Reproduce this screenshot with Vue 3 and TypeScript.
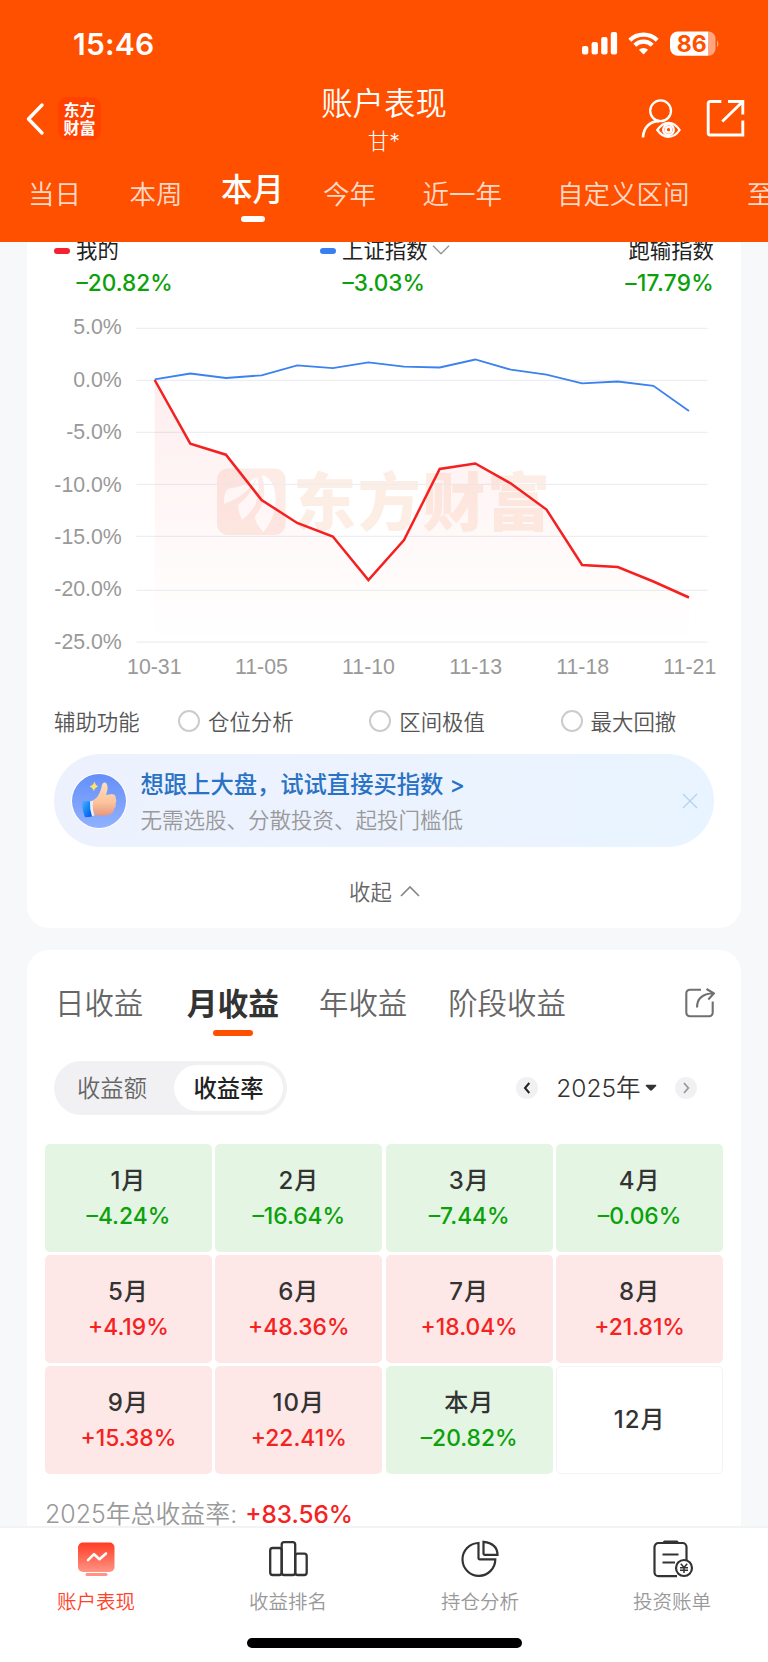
<script setup lang="ts">
interface Tab { label: string; left: number; active?: boolean }
interface Month { name: string; value?: string; tone: 'down' | 'up' | 'none' }

const periods: Tab[] = [
  { label: '当日', left: 28 },
  { label: '本周', left: 48.5 },
  { label: '本月', left: 38.5, active: true },
  { label: '今年', left: 39 },
  { label: '近一年', left: 46.5 },
  { label: '自定义区间', left: 55 },
  { label: '至今', left: 57.5 },
]

const X0 = 154.7
const STEP = 35.62
const mine = [380, 443.7, 454.7, 500, 523, 536.5, 580, 540, 469, 463.5, 483.5, 509.5, 565, 567, 581.5, 597.5]
const index = [379.3, 373.5, 378, 375.3, 365.3, 368.2, 362.3, 366.7, 367.5, 359.5, 369.7, 374.7, 383.3, 381.5, 385.8, 411]
const toPoints = (ys: number[]) => ys.map((y, i) => `${(X0 + STEP * i).toFixed(1)},${y}`).join(' ')
const mineLine = toPoints(mine)
const indexLine = toPoints(index)
const mineArea = `${X0},642 ${mineLine} ${X0 + STEP * 15},642`

const yAxis = [
  { label: '5.0%', y: 328.3 },
  { label: '0.0%', y: 380.4 },
  { label: '-5.0%', y: 432.4 },
  { label: '-10.0%', y: 484.4 },
  { label: '-15.0%', y: 536.4 },
  { label: '-20.0%', y: 590.3 },
  { label: '-25.0%', y: 642.2 },
]
const yBase = [334.3, 386.8, 439.2, 491.5, 544, 596.4, 648.8]
const xAxis = ['10-31', '11-05', '11-10', '11-13', '11-18', '11-21']

const helpers = ['仓位分析', '区间极值', '最大回撤']

const incomeTabs: Tab[] = [
  { label: '日收益', left: 28 },
  { label: '月收益', left: 43.5, active: true },
  { label: '年收益', left: 40 },
  { label: '阶段收益', left: 41 },
]

const months: Month[] = [
  { name: '1月', value: '–4.24%', tone: 'down' },
  { name: '2月', value: '–16.64%', tone: 'down' },
  { name: '3月', value: '–7.44%', tone: 'down' },
  { name: '4月', value: '–0.06%', tone: 'down' },
  { name: '5月', value: '+4.19%', tone: 'up' },
  { name: '6月', value: '+48.36%', tone: 'up' },
  { name: '7月', value: '+18.04%', tone: 'up' },
  { name: '8月', value: '+21.81%', tone: 'up' },
  { name: '9月', value: '+15.38%', tone: 'up' },
  { name: '10月', value: '+22.41%', tone: 'up' },
  { name: '本月', value: '–20.82%', tone: 'down' },
  { name: '12月', tone: 'none' },
]
</script>

<template>
  <div class="screen">
    <header class="header">
      <div class="status">
        <span class="time">15:46</span>
        <svg class="status-icons" width="140" height="28" viewBox="0 0 140 28">
          <g fill="#fff">
            <rect x="0" y="16" width="6.3" height="8.6" rx="2" />
            <rect x="9.6" y="12" width="6.3" height="12.6" rx="2" />
            <rect x="19.2" y="7" width="6.3" height="17.6" rx="2" />
            <rect x="28.8" y="2" width="6.3" height="22.6" rx="2" />
          </g>
          <g fill="none" stroke="#fff" stroke-width="4.2">
            <path d="M47.8 10.2a19.4 19.4 0 0 1 27.4 0" />
            <path d="M52.8 15.2a12.3 12.3 0 0 1 17.4 0" />
          </g>
          <path d="M61.5 24.5l-4.6-4.700a6.500 6.500 0 0 1 9.200 0z" fill="#fff" />
          <path d="M96 1.500h30.500v24.300H96a8 8 0 0 1-8-8V9.500a8 8 0 0 1 8-8z" fill="#fff" />
          <path d="M126.500 1.500a7 7 0 0 1 7 7v10.300a7 7 0 0 1-7 7z" fill="#ffa680" />
          <path d="M135 10.200q3 3.500 0 7z" fill="#ffa680" />
          <text x="109.800" y="21.900" text-anchor="middle" class="battery">86</text>
        </svg>
      </div>
      <div class="nav">
        <svg class="back" width="20" height="34" viewBox="0 0 20 34"><path d="M17 3L3.500 17L17 31" fill="none" stroke="#fff" stroke-width="3.400" stroke-linecap="round" stroke-linejoin="round" /></svg>
        <div class="brand"><span>东方</span><span>财富</span></div>
        <div class="title">
          <h1>账户表现</h1>
          <p>甘*</p>
        </div>
        <svg class="user" width="42" height="42" viewBox="0 0 42 42" fill="none" stroke="#fff" stroke-width="2.300">
          <circle cx="20.600" cy="12.800" r="10.400" />
          <path d="M3 39.500c.4-10.200 7.200-16.200 16-16.400" stroke-width="2.600" />
          <path d="M17.300 32c3.200-4.800 7-7.200 11.200-7.200S36.700 27.200 39.600 32c-2.900 4.500-6.900 6.800-11.100 6.800S20.500 36.500 17.300 32z" />
          <circle cx="28.500" cy="31.700" r="5.300" />
          <circle cx="28.500" cy="31.700" r="2.800" />
        </svg>
        <svg class="export" width="40" height="40" viewBox="0 0 40 40" fill="none" stroke="#fff" stroke-width="2.900">
          <path d="M16.300 3.500H5.200a2 2 0 0 0-2 2V35a2 2 0 0 0 2 2h32.600V22.500M23 3.500h14.800v13M37 4.300L17.300 23.500" />
        </svg>
      </div>
      <nav class="periods">
        <span v-for="p in periods" :key="p.label" class="period" :class="{ active: p.active }" :style="{ marginLeft: p.left + 'px' }">{{ p.label }}</span>
      </nav>
    </header>

    <main class="content">
      <section class="card chart-card">
        <div class="legend">
          <div class="leg first"><div class="leg-name"><i class="dash red"></i>我的</div><b>–20.82%</b></div>
          <div class="leg second">
            <div class="leg-name"><i class="dash blue"></i>上证指数
              <svg width="18" height="12" viewBox="0 0 18 12"><path d="M1 1.800l8 8 8-8" fill="none" stroke="#999" stroke-width="1.500" /></svg>
            </div><b>–3.03%</b>
          </div>
          <div class="leg third"><div class="leg-name">跑输指数</div><b>–17.79%</b></div>
        </div>
        <svg class="chart" width="714" height="390" viewBox="27 300 714 390">
          <defs>
            <linearGradient id="area" x1="0" y1="380" x2="0" y2="642" gradientUnits="userSpaceOnUse">
              <stop offset="0" stop-color="#f5222d" stop-opacity=".08" />
              <stop offset=".85" stop-color="#f5402d" stop-opacity=".012" />
              <stop offset="1" stop-color="#f5222d" stop-opacity="0" />
            </linearGradient>
          </defs>
          <g>
            <rect x="217" y="468.500" width="68.500" height="66.500" rx="11" fill="#fdebe6" />
            <g fill="#fff">
              <path d="M224 504q-.5-13 5-15.500 15-1 28-12-9 19-33 27.500z" />
              <path d="M238 505q14-10 19.500-29 2.500 15-1.500 27-4 9-14 17-3.500-7-4-15z" />
              <path d="M262 475q15 4 13.500 31-3 16-12 26-9-9-8.500-16 14-16 7-41z" />
            </g>
            <text x="293" y="525" class="watermark" textLength="257">东方财富</text>
          </g>
          <line v-for="t in yAxis" :key="t.label" x1="136.500" x2="707.500" :y1="t.y" :y2="t.y" stroke="#edeef4" stroke-width="1.200" />
          <polygon :points="mineArea" fill="url(#area)" />
          <text v-for="(t, i) in yAxis" :key="'l' + t.label" x="121.800" :y="yBase[i]" text-anchor="end" class="axis">{{ t.label }}</text>
          <text v-for="(d, i) in xAxis" :key="d" :x="154.300 + 107.100 * i" y="674.300" text-anchor="middle" class="axis">{{ d }}</text>
          <polyline :points="indexLine" fill="none" stroke="#3b82f0" stroke-width="1.800" />
          <polyline :points="mineLine" fill="none" stroke="#f52020" stroke-width="2.500" />
        </svg>
        <div class="helpers">
          <span class="helper-title">辅助功能</span>
          <label v-for="h in helpers" :key="h" class="helper"><i></i><span>{{ h }}</span></label>
        </div>
        <div class="banner">
          <svg class="thumb" width="58" height="58" viewBox="0 0 58 58">
            <defs>
              <linearGradient id="tb" x1="0" y1="0" x2="0" y2="1"><stop offset="0" stop-color="#648ff8" /><stop offset="1" stop-color="#91b1ff" /></linearGradient>
              <linearGradient id="hand" x1="0" y1="0" x2="0" y2="1"><stop offset="0" stop-color="#ffe0bd" /><stop offset=".6" stop-color="#fbc49d" /><stop offset="1" stop-color="#e7967d" /></linearGradient>
              <linearGradient id="cuff" x1="0" y1="0" x2="1" y2="1"><stop offset="0" stop-color="#4caeff" /><stop offset=".5" stop-color="#1485f7" /><stop offset="1" stop-color="#0650dd" /></linearGradient>
            </defs>
            <circle cx="29" cy="29" r="28" fill="#fff" />
            <circle cx="29" cy="29" r="27" fill="url(#tb)" />
            <path d="M20 29.500q7-2 9.500-8.500 1.500-3 2.500-8 .5-3 3-2.500 3 1 2.500 7l-1.500 5.500 6-1q4 .5 3.700 4 1.500 3-.2 5.500 1 3-1.500 5.500 0 3-3 4.500-2 2-8 2.200-7 .5-13.500-2.700z" fill="url(#hand)" />
            <path d="M19 29.500l4-.5q-1 8 1.500 14.500l-4 .8z" fill="#e9f1ff" />
            <path d="M12.500 29q4 .5 7.500 0-.5 8 2 15.500-4 .8-7 .8-3.500-9-2.500-16.300z" fill="url(#cuff)" />
            <path d="M24.500 9.500q1 4 3.800 4.800-3.200 1-4.600 5-.8-3.800-4.200-4.800 3.800-1.200 5-5z" fill="#ffe16b" />
          </svg>
          <div class="banner-text"><strong>想跟上大盘，试试直接买指数 <em>&gt;</em></strong><span>无需选股、分散投资、起投门槛低</span></div>
          <svg class="close" width="16" height="16" viewBox="0 0 16 16"><path d="M1 1l14 14M15 1L1 15" stroke="#b4cfee" stroke-width="1.100" /></svg>
        </div>
        <div class="collapse"><span>收起</span><svg width="20" height="12" viewBox="0 0 20 12"><path d="M1 11l9-9 9 9" fill="none" stroke="#888" stroke-width="1.700" /></svg></div>
      </section>

      <section class="card income-card">
        <div class="income-tabs">
          <span v-for="t in incomeTabs" :key="t.label" class="income-tab" :class="{ active: t.active }" :style="{ marginLeft: t.left + 'px' }">{{ t.label }}</span>
          <svg class="share" width="32" height="32" viewBox="0 0 32 32" fill="none" stroke="#707070" stroke-width="2.100" stroke-linejoin="round">
            <path d="M17 2.700H5.800a3.500 3.500 0 0 0-3.500 3.500v19.500a3.500 3.500 0 0 0 3.500 3.500h19.400a3.500 3.500 0 0 0 3.500-3.500V14.500" />
            <path d="M13 20.500C13 12.500 18 6.800 29.300 6.300M22.500 2l7.500 4.300-5.700 6.200" />
          </svg>
        </div>
        <div class="controls">
          <div class="segment"><span>收益额</span><span class="on">收益率</span></div>
          <div class="year">
            <i class="round"><svg width="8" height="12" viewBox="0 0 8 12"><path d="M6.300 1L2 6l4.300 5" fill="none" stroke="#222" stroke-width="2" /></svg></i>
            <span>2025年</span>
            <svg class="caret" width="12" height="8" viewBox="0 0 12 8"><path d="M1.200.8h9.600q1 .5.300 1.200L7 6.300q-1 .9-2 0L.9 2Q.2 1.300 1.200.8z" fill="#333" /></svg>
            <i class="round"><svg width="8" height="12" viewBox="0 0 8 12"><path d="M2 1l4.300 5L2 11" fill="none" stroke="#999" stroke-width="1.800" /></svg></i>
          </div>
        </div>
        <div class="months">
          <div v-for="m in months" :key="m.name" class="month" :class="m.tone"><span>{{ m.name }}</span><b v-if="m.value">{{ m.value }}</b></div>
        </div>
        <p class="total">2025年总收益率:<b>+83.56%</b></p>
      </section>
    </main>

    <footer class="tabbar">
      <div class="tabs">
        <div class="tab current">
          <svg width="44" height="44" viewBox="0 0 44 44">
            <defs><linearGradient id="mon" x1="0" y1="0" x2="0" y2="1"><stop offset="0" stop-color="#ff3c22" /><stop offset="1" stop-color="#ff9485" /></linearGradient></defs>
            <rect x="4" y="7.500" width="36.500" height="29.500" rx="5" fill="url(#mon)" />
            <path d="M14 25.200l6-6 5.500 5 6.500-5.700" fill="none" stroke="#fff" stroke-width="2.600" stroke-linecap="round" stroke-linejoin="round" />
            <rect x="11.500" y="38" width="22" height="3" rx="1.500" fill="#ff9485" />
          </svg><span>账户表现</span>
        </div>
        <div class="tab">
          <svg width="44" height="44" viewBox="0 0 44 44" fill="none" stroke="#333" stroke-width="2.300"><rect x="4.200" y="13" width="11.500" height="27" rx="2.500" /><rect x="15.700" y="7.200" width="13.500" height="32.800" rx="2.500" /><rect x="29.200" y="18.700" width="11.500" height="21.300" rx="2.500" /></svg><span>收益排名</span>
        </div>
        <div class="tab">
          <svg width="44" height="44" viewBox="0 0 44 44" fill="none" stroke="#333" stroke-width="2.200"><path d="M20.500 8A16.400 16.400 0 1 0 37.300 24.300H21.500q-1 0-1-1z" /><path d="M25.500 6.800v12q0 1 1 1H39.500Q39.500 8.500 25.500 6.800z" /></svg><span>持仓分析</span>
        </div>
        <div class="tab">
          <svg width="44" height="44" viewBox="0 0 44 44" fill="none" stroke="#333" stroke-width="2.200">
            <path d="M27 41.200H8.500a4 4 0 0 1-4-4V12a4 4 0 0 1 4-4h24a4 4 0 0 1 4 4v13M12.500 19.500H28.500M12.500 27.500H25" />
            <path d="M14.500 7H27" stroke-width="3" stroke-linecap="round" />
            <circle cx="34" cy="33" r="8" />
            <path d="M30.800 28.800l3.200 3.700 3.200-3.700M34 32.500v5.500M30 32.800h8M30 35.300h8" stroke-width="1.500" />
          </svg><span>投资账单</span>
        </div>
      </div>
      <div class="home"></div>
    </footer>
  </div>
</template>

<style>
body { margin: 0; background: #f6f7fa; }
</style>

<style scoped>
* { box-sizing: border-box; }
.screen {
  width: 768px; height: 1662px; overflow: hidden;
  display: grid; grid-template-rows: 242px 1284px 136px;
  font-family: Inter, "Noto Sans CJK SC", sans-serif; color: #333; background: #f6f8fa;
}
h1, p { margin: 0; font-weight: 400; }
i, em { font-style: normal; }
b { font-weight: 500; }
svg { display: block; flex: none; }
.header { background: #ff5000; color: #fff; overflow: hidden; }
.status { height: 88px; display: flex; justify-content: space-between; padding: 30px 53px 0 73px; }
.time { font-size: 30px; font-weight: 600; line-height: 28px; letter-spacing: .2px; }
.status-icons { margin-right: -7px; }
.battery { font: 700 23px Inter, sans-serif; fill: #ff5000; }
.nav { height: 72px; display: flex; align-items: flex-start; }
.back { margin: 14px 0 0 25px; }
.brand {
  width: 43px; height: 43px; margin: 9px 0 0 13px; padding-top: 3px; border-radius: 9px; background: #ff4200;
  display: flex; flex-direction: column; align-items: center;
  font-family: "Noto Sans CJK SC", sans-serif; font-size: 16px; font-weight: 700; line-height: 18px;
}
.title { width: 320px; margin-left: 123px; text-align: center; }
.title h1 { font-size: 31.400px; line-height: 36px; margin-top: -2px; font-weight: 350; }
.title p { font-size: 21.500px; line-height: 28px; margin-top: 5px; font-weight: 300; }
.user { margin: 10px 0 0 96px; }
.export { margin: 10px 0 0 23px; }
.periods { display: flex; white-space: nowrap; font-size: 26.500px; font-weight: 350; color: rgba(255, 255, 255, .8); }
.period { flex: none; line-height: 36px; margin-top: 16px; }
.period.active { font-size: 31.500px; font-weight: 500; color: #fff; margin-top: 12px; display: flex; flex-direction: column; align-items: center; }
.period.active::after { content: ""; width: 24px; height: 6px; border-radius: 3px; background: #fff; margin-top: 8px; }

.content { overflow: hidden; padding: 0 27px; }
.card { background: #fff; }
.chart-card { height: 686px; border-radius: 0 0 22px 22px; }
.legend { display: flex; height: 58px; font-size: 21.400px; }
.leg-name { display: flex; align-items: center; height: 32px; margin-top: -8px; line-height: 32px; color: #222; }
.leg-name svg { margin-left: 4px; }
.leg b { display: block; font-size: 22.600px; line-height: 30px; margin-top: 2px; color: #0ba10b; padding-left: 22.500px; }
.first { width: 266px; padding-left: 27px; }
.second { width: 200px; padding-left: 27px; }
.third { margin-left: auto; padding-right: 27px; }
.leg.third b { padding: 0; text-align: right; letter-spacing: .3px; }
.third .leg-name { justify-content: flex-end; }
.dash { width: 16px; height: 6px; border-radius: 3px; margin: 2px 6px 0 0; }
.red { background: #f5222d; }
.blue { background: #3880f2; }
.axis { font: 21.300px "Liberation Sans", Arial, sans-serif; fill: #999; }
.watermark { font: 900 63px "Noto Sans CJK SC", sans-serif; fill: #fdeee5; }
.helpers { display: flex; height: 62px; align-items: center; padding: 0 0 0 27px; font-size: 21.400px; color: #555; font-weight: 350; }
.helper-title { flex: none; width: 124px; margin-top: -2px; }
.helper { flex: none; width: 191.300px; display: flex; align-items: center; }
.helper span { margin-top: -2px; }
.helper i { width: 22px; height: 22px; border: 2px solid #ccc; border-radius: 50%; margin-right: 8px; }
.banner { width: 660px; height: 93px; margin: 2px 0 0 27px; border-radius: 47px; background: linear-gradient(100deg, #edf1fe, #ebf3ff 65%, #e8f4ff); display: flex; align-items: center; }
.thumb { margin-left: 16px; }
.banner-text { margin-left: 12.500px; flex: 1; display: flex; flex-direction: column; }
.banner-text strong { font-size: 23.300px; font-weight: 500; line-height: 34px; color: #2a72c5; margin-top: 2px; }
.banner-text em { font-size: 23px; }
.banner-text span { font-size: 21.500px; line-height: 32px; margin-top: 2px; color: #999; font-weight: 350; }
.close { margin-right: 16px; }
.collapse { display: flex; align-items: center; margin: 27px 0 0 322px; height: 34px; font-size: 21.400px; color: #666; font-weight: 350; }
.collapse span { margin-top: -2px; }
.collapse svg { margin-left: 8px; }

.income-card { height: 620px; margin-top: 22px; border-radius: 22px 22px 0 0; }
.income-tabs { display: flex; height: 106px; font-size: 29.400px; color: #666; font-weight: 350; white-space: nowrap; }
.income-tab { margin-top: 34px; line-height: 40px; }
.income-tab.active { font-size: 30.800px; font-weight: 700; color: #333; display: flex; flex-direction: column; align-items: center; }
.income-tab.active::after { content: ""; width: 40px; height: 6px; border-radius: 3px; background: #ff5000; margin-top: 6px; }
.share { margin: 37px 25.500px 0 auto; }
.controls { display: flex; justify-content: space-between; align-items: center; height: 64px; padding: 0 44.500px 0 27px; }
.segment { width: 233px; height: 54px; padding: 4px; border-radius: 27px; background: #f1f1f4; display: flex; align-items: center; font-size: 23.300px; color: #666; font-weight: 350; }
.segment span { width: 108px; text-align: center; line-height: 46px; padding-top: 1px; height: 46px; }
.segment .on { width: 109px; margin-left: auto; background: #fff; border-radius: 23px; color: #222; font-weight: 500; }
.year { display: flex; align-items: center; font-size: 24.500px; font-weight: 350; }
.year span { margin: -3px 0 0 18px; }
.caret { margin: 0 18px 0 4px; }
.round { width: 22px; height: 22px; border-radius: 50%; background: #f1f1f4; display: flex; align-items: center; justify-content: center; }
.months { margin: 24px 18px 0; display: grid; grid-template-columns: repeat(4, 1fr); grid-auto-rows: 107.500px; gap: 3.600px; }
.month { border-radius: 5px; display: flex; flex-direction: column; align-items: center; justify-content: center; }
.month span { font-size: 24px; line-height: 36px; font-weight: 500; color: #333; letter-spacing: 1px; }
.month b { font-size: 22.800px; line-height: 34px; }
.down { background: #e4f5e4; }
.up { background: #fde7e7; }
.down b { color: #0ba10b; }
.up b, .total b { color: #f52222; }
.none { border: 1px solid #f3f3f5; }
.total { margin: 22px 0 0 18px; font-size: 24.900px; line-height: 36px; color: #999; font-weight: 350; white-space: nowrap; }
.total b { margin-left: 8px; font-size: 24.300px; }

.tabbar { background: #fff; border-top: 2px solid #f2f3f5; }
.tabs { display: grid; grid-template-columns: repeat(4, 1fr); }
.tab { display: flex; flex-direction: column; align-items: center; padding-top: 7px; height: 110px; font-size: 19.500px; color: #999; font-weight: 350; }
.tab span { line-height: 28px; margin-top: 9px; }
.current { color: #ff4128; }
.home { width: 275px; height: 10px; border-radius: 5px; background: #000; margin-left: 247px; }
</style>
